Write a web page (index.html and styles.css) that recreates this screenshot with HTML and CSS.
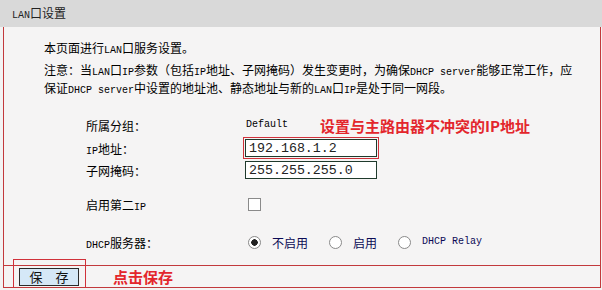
FILE: index.html
```html
<!DOCTYPE html>
<html lang="zh-CN">
<head>
    <meta charset="UTF-8">
    <title>LAN口设置</title>
    <link rel="stylesheet" href="styles.css">
</head>
<body>
    <div class="header"><span class="en">LAN</span>口设置</div>

    <div class="panel">
        <div class="content">
            <p class="intro">本页面进行<span class="en">LAN</span>口服务设置。</p>
            <p class="note">注意：当<span class="en">LAN</span>口<span class="en">IP</span>参数（包括<span class="en">IP</span>地址、子网掩码）发生变更时，为确保<span class="en">DHCP server</span>能够正常工作，应<br>保证<span class="en">DHCP server</span>中设置的地址池、静态地址与新的<span class="en">LAN</span>口<span class="en">IP</span>是处于同一网段。</p>

            <div class="form">
                <div class="row">
                    <span class="label">所属分组：</span>
                    <span class="value en">Default</span>
                    <span class="tip">设置与主路由器不冲突的IP地址</span>
                </div>
                <div class="row row-ip">
                    <span class="label"><span class="en">IP</span>地址：</span>
                    <input type="text" class="field mark" value="192.168.1.2">
                </div>
                <div class="row">
                    <span class="label">子网掩码：</span>
                    <input type="text" class="field" value="255.255.255.0">
                </div>
                <div class="row row-second">
                    <span class="label">启用第二<span class="en">IP</span></span>
                    <input type="checkbox" class="check">
                </div>
                <div class="row row-dhcp">
                    <span class="label"><span class="en">DHCP</span>服务器：</span>
                    <label class="option"><input type="radio" name="dhcp" class="radio" checked>不启用</label>
                    <label class="option"><input type="radio" name="dhcp" class="radio">启用</label>
                    <label class="option"><input type="radio" name="dhcp" class="radio"><span class="en">DHCP Relay</span></label>
                </div>
            </div>
        </div>

        <div class="footer">
            <button type="button" class="save-button">保 存</button>
            <span class="tip">点击保存</span>
        </div>

        <div class="save-mark"></div>
    </div>
</body>
</html>
```

FILE: styles.css
```css
* {
    margin: 0;
    padding: 0;
    box-sizing: border-box;
}

body {
    font-family: "Noto Sans CJK SC", "Noto Sans", sans-serif;
    font-size: 12px;
    color: #000;
    background: #f3f3f3;
    width: 602px;
}

.en {
    font-family: "Liberation Mono", "DejaVu Sans Mono", monospace;
    font-size: 10px;
    line-height: 10px;
}

.header {
    height: 27px;
    line-height: 26px;
    padding-left: 12px;
    background: #d9d9d9;
    color: #222;
}

.panel {
    position: relative;
    margin-left: 3px;
    width: 598px;
    background: #f5f4f4;
    border: 1px solid #c2393c;
    border-top: none;
}

.content {
    height: 238px;
    padding: 12px 0 0 40px;
}

.intro,
.note {
    line-height: 18px;
}

.note {
    margin-top: 4px;
}

.form {
    margin-top: 17px;
    margin-left: 42px;
}

.row {
    display: flex;
    align-items: center;
    height: 22px;
}

.row-ip {
    margin-top: 1px;
}

.row-second {
    margin-top: 12px;
}

.row-dhcp {
    margin-top: 16px;
}

.label {
    width: 159px;
    flex-shrink: 0;
}

.value {
    width: 75px;
    padding-left: 1px;
}

.tip {
    color: #e3262c;
    font-weight: 700;
    font-size: 15px;
}

.field {
    width: 132px;
    height: 18px;
    padding: 0 3px;
    border: 1px solid #1f3a2c;
    background: #fff;
    font-family: "Liberation Mono", "DejaVu Sans Mono", monospace;
    font-size: 13.3px;
    color: #222;
    outline: none;
}

.field.mark {
    outline: 1px solid #d0313a;
    outline-offset: 1px;
}

.check,
.radio {
    appearance: none;
    width: 13px;
    height: 13px;
    border: 1px solid #8a8a8a;
    background: #fff;
    flex-shrink: 0;
}

.check {
    margin-left: 3px;
}

.radio {
    border-radius: 50%;
    margin-left: 3px;
    margin-right: 11px;
}

.radio:checked {
    background: radial-gradient(circle, #222 0 3px, #fff 3.5px);
}

.option {
    display: flex;
    align-items: center;
    color: #0b0b55;
    margin-right: 18px;
}

.footer {
    display: flex;
    align-items: center;
    height: 22px;
    padding-left: 15px;
    border-top: 1px solid #c2393c;
}

.save-button {
    width: 60px;
    height: 18px;
    padding-left: 5px;
    background: #d5e8f7;
    border: 1px solid #2a2a2a;
    font-family: "Noto Sans CJK SC", sans-serif;
    font-size: 13px;
    line-height: 16px;
    letter-spacing: 5px;
    color: #111;
    margin-right: 34px;
}

.save-mark {
    position: absolute;
    left: 9px;
    top: 232px;
    width: 73px;
    height: 31px;
    border: 1px solid #d0313a;
}
```
